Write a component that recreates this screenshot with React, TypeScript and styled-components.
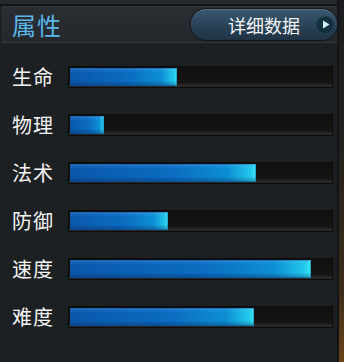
import React from 'react';
import styled, { createGlobalStyle } from 'styled-components';

const GlobalStyle = createGlobalStyle`
  html, body {
    margin: 0;
    padding: 0;
    background: #1d2023;
  }
  body {
    font-family: "Noto Sans CJK SC", "Noto Sans", sans-serif;
  }
`;

interface Stat {
  name: string;
  value: number;
}

const stats: Stat[] = [
  { name: '生命', value: 107 },
  { name: '物理', value: 34 },
  { name: '法术', value: 186 },
  { name: '防御', value: 98 },
  { name: '速度', value: 241 },
  { name: '难度', value: 184 },
];

const TRACK_INNER = 261;

const App = () => {
  return (
    <>
      <GlobalStyle />
      <Frame>
        <Panel>
          <TopStrip />
          <Header>
            <Title>属性</Title>
            <DetailButton>
              <span>详细数据</span>
              <PlayIcon>
                <svg width="8" height="9" viewBox="0 0 8 9">
                  <path d="M1 0.5 L7.5 4.5 L1 8.5 Z" fill="#d4eef4" />
                </svg>
              </PlayIcon>
            </DetailButton>
          </Header>
          <StatList>
            {stats.map((s) => (
              <StatRow key={s.name}>
                <Label>{s.name}</Label>
                <Track>
                  <Fill style={{ width: `${s.value}px` }} />
                </Track>
              </StatRow>
            ))}
          </StatList>
        </Panel>
        <SideEdge />
      </Frame>
    </>
  );
};

const Frame = styled.div`
  display: flex;
  width: 344px;
  height: 362px;
  overflow: hidden;
  background: #1d2023;
`;

const Panel = styled.div`
  flex: 1;
  display: flex;
  flex-direction: column;
`;

const SideEdge = styled.div`
  width: 5px;
  border-left: 2px solid #121416;
  background: linear-gradient(180deg, #1a1c1e 0%, #23221f 40%, #3a2c1a 80%, #6b4418 100%);
`;

const TopStrip = styled.div`
  height: 4px;
  background: #25292d;
  border-bottom: 2px solid #121416;
`;

const Header = styled.div`
  display: flex;
  align-items: center;
  justify-content: space-between;
  height: 35px;
  margin-left: 2px;
  padding: 0 0 0 9px;
  background: linear-gradient(180deg, #2a2e33 0%, #24282c 100%);
  border-top: 1px solid #30353a;
  border-bottom: 1px solid #33373b;
  border-left: 1px solid #2e3338;
`;

const Title = styled.div`
  color: #5ab6ea;
  font-size: 24px;
  line-height: 1;
  letter-spacing: 1px;
`;

const DetailButton = styled.div`
  display: flex;
  align-items: center;
  justify-content: flex-end;
  gap: 17px;
  width: 146px;
  height: 31px;
  box-sizing: border-box;
  padding-right: 4px;
  border-radius: 16px;
  background: linear-gradient(180deg, #3a5871 0%, #2c465c 45%, #1f3343 100%);
  box-shadow: inset 0 1px 0 rgba(140, 180, 210, 0.25), 0 0 0 1px #15191d;
  color: #f2f4f6;
  font-size: 18px;

  span {
    line-height: 1;
  }
`;

const PlayIcon = styled.div`
  display: flex;
  align-items: center;
  justify-content: center;
  width: 16px;
  height: 16px;
  padding-left: 1px;
  box-sizing: border-box;
  border-radius: 50%;
  background: radial-gradient(circle at 50% 45%, #14394a 0%, #0c2533 100%);
  box-shadow: 0 0 0 1.5px #243f50;
`;

const StatList = styled.div`
  display: flex;
  flex-direction: column;
  gap: 26px;
  padding: 23px 0 0 12px;
`;

const StatRow = styled.div`
  display: flex;
  align-items: center;
  gap: 14px;
  height: 22px;
`;

const Label = styled.div`
  width: 42px;
  color: #f4f4f4;
  font-size: 20px;
  line-height: 1;
  letter-spacing: 1px;
`;

const Track = styled.div`
  width: ${TRACK_INNER}px;
  height: 18px;
  padding: 2px;
  background: linear-gradient(180deg, #0f0f0e 0%, #161514 75%, #2e2d2b 90%, #1f1e1d 100%);
  box-shadow: inset 0 0 0 1px #0c0c0c;
`;

const Fill = styled.div`
  height: 100%;
  background:
    linear-gradient(180deg, rgba(120, 190, 255, 0.25) 0%, rgba(0, 0, 0, 0) 25%, rgba(0, 0, 0, 0) 70%, rgba(0, 20, 60, 0.35) 100%),
    linear-gradient(90deg, #0a58ac 0%, #0b6cc0 55%, #0d8fd4 85%, #22c8ec 97%, #3be6f4 100%);
  box-shadow: inset 0 0 0 1px rgba(20, 80, 150, 0.4);
`;

export default App;
